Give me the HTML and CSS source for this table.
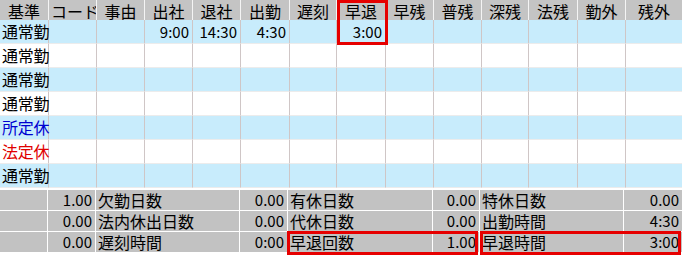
FILE: index.html
```html
<!DOCTYPE html>
<html lang="ja">
<head>
<meta charset="utf-8">
<title>勤務表</title>
<link rel="stylesheet" href="styles.css">
</head>
<body>
<div class="sheet">
  <div class="grid">
    <div class="hd">基準</div><div class="hd clip">コード</div><div class="hd">事由</div><div class="hd">出社</div><div class="hd">退社</div><div class="hd">出勤</div><div class="hd">遅刻</div><div class="hd">早退</div><div class="hd">早残</div><div class="hd">普残</div><div class="hd">深残</div><div class="hd">法残</div><div class="hd">勤外</div><div class="hd last">残外</div>

    <div class="c b lbl">通常勤</div><div class="c b"></div><div class="c b"></div><div class="c b num">9:00</div><div class="c b num">14:30</div><div class="c b num">4:30</div><div class="c b"></div><div class="c b num">3:00</div><div class="c b"></div><div class="c b"></div><div class="c b"></div><div class="c b"></div><div class="c b"></div><div class="c b last"></div>

    <div class="c lbl">通常勤</div><div class="c"></div><div class="c"></div><div class="c"></div><div class="c"></div><div class="c"></div><div class="c"></div><div class="c"></div><div class="c"></div><div class="c"></div><div class="c"></div><div class="c"></div><div class="c"></div><div class="c last"></div>

    <div class="c b lbl">通常勤</div><div class="c b"></div><div class="c b"></div><div class="c b"></div><div class="c b"></div><div class="c b"></div><div class="c b"></div><div class="c b"></div><div class="c b"></div><div class="c b"></div><div class="c b"></div><div class="c b"></div><div class="c b"></div><div class="c b last"></div>

    <div class="c lbl">通常勤</div><div class="c"></div><div class="c"></div><div class="c"></div><div class="c"></div><div class="c"></div><div class="c"></div><div class="c"></div><div class="c"></div><div class="c"></div><div class="c"></div><div class="c"></div><div class="c"></div><div class="c last"></div>

    <div class="c b lbl blue">所定休</div><div class="c b"></div><div class="c b"></div><div class="c b"></div><div class="c b"></div><div class="c b"></div><div class="c b"></div><div class="c b"></div><div class="c b"></div><div class="c b"></div><div class="c b"></div><div class="c b"></div><div class="c b"></div><div class="c b last"></div>

    <div class="c lbl red">法定休</div><div class="c"></div><div class="c"></div><div class="c"></div><div class="c"></div><div class="c"></div><div class="c"></div><div class="c"></div><div class="c"></div><div class="c"></div><div class="c"></div><div class="c"></div><div class="c"></div><div class="c last"></div>

    <div class="c b lbl">通常勤</div><div class="c b"></div><div class="c b"></div><div class="c b"></div><div class="c b"></div><div class="c b"></div><div class="c b"></div><div class="c b"></div><div class="c b"></div><div class="c b"></div><div class="c b"></div><div class="c b"></div><div class="c b"></div><div class="c b last"></div>
  </div>

  <div class="summary">
    <div class="s"></div><div class="s num">1.00</div><div class="s txt">欠勤日数</div><div class="s num">0.00</div><div class="s txt">有休日数</div><div class="s num">0.00</div><div class="s txt">特休日数</div><div class="s num">0.00</div>
    <div class="s"></div><div class="s num">0.00</div><div class="s txt">法内休出日数</div><div class="s num">0.00</div><div class="s txt">代休日数</div><div class="s num">0.00</div><div class="s txt">出勤時間</div><div class="s num">4:30</div>
    <div class="s"></div><div class="s num">0.00</div><div class="s txt">遅刻時間</div><div class="s num">0:00</div><div class="s txt">早退回数</div><div class="s num">1.00</div><div class="s txt">早退時間</div><div class="s num">3:00</div>
  </div>

  <div class="mark mark-head"></div>
  <div class="mark mark-count"></div>
  <div class="mark mark-time"></div>
</div>
</body>
</html>
```

FILE: styles.css
```css
html, body {
  margin: 0;
  padding: 0;
  background: #ffffff;
}

.sheet {
  position: relative;
  width: 682px;
  height: 256px;
  overflow: hidden;
  font-family: "Noto Sans CJK JP", "Noto Sans", sans-serif;
  font-size: 16px;
  color: #000;
}

.grid {
  display: grid;
  grid-template-columns: 49px 48px 48px 48px 48px 49px 47px 49px 48px 48px 47px 49px 48px 56px;
  grid-template-rows: 20px repeat(7, 24px);
}

.hd {
  box-sizing: border-box;
  background: #c4c4c4;
  border-right: 1px solid #f4f4f4;
  text-align: center;
  line-height: 20px;
  padding-top: 1px;
  white-space: nowrap;
}

.hd.clip {
  text-align: left;
  padding-left: 2px;
  overflow: hidden;
}

.hd.last {
  border-right: none;
}

.c {
  box-sizing: border-box;
  background: #ffffff;
  border-right: 1px solid #cfc6c6;
  border-bottom: 1px solid #ececec;
  line-height: 23px;
  white-space: nowrap;
}

.c.b {
  background: #c8ecfc;
}

.c.last {
  border-right: none;
}

.lbl {
  padding-left: 2px;
  letter-spacing: -0.3px;
  position: relative;
  z-index: 1;
}

.num {
  text-align: right;
  padding-right: 3px;
  font-size: 15px;
}

.blue {
  color: #0000d0;
}

.red {
  color: #e00000;
}

.summary {
  display: grid;
  grid-template-columns: 47px 47px 143px 47px 144px 46px 143px 58px;
  grid-template-rows: repeat(3, 20px);
  column-gap: 1px;
  row-gap: 1px;
  padding-top: 2px;
  background: #ffffff;
}

.s {
  box-sizing: border-box;
  background: #c2c2c2;
  line-height: 20px;
  white-space: nowrap;
}

.s.txt {
  padding-left: 2px;
}

.s.num {
  padding-right: 3px;
}

.mark {
  position: absolute;
  box-sizing: border-box;
  border: 3px solid #e60000;
}

.mark-head {
  left: 337px;
  top: 0;
  width: 51px;
  height: 45px;
}

.mark-count {
  left: 287px;
  top: 231px;
  width: 191px;
  height: 24px;
}

.mark-time {
  left: 480px;
  top: 231px;
  width: 201px;
  height: 24px;
}
```
